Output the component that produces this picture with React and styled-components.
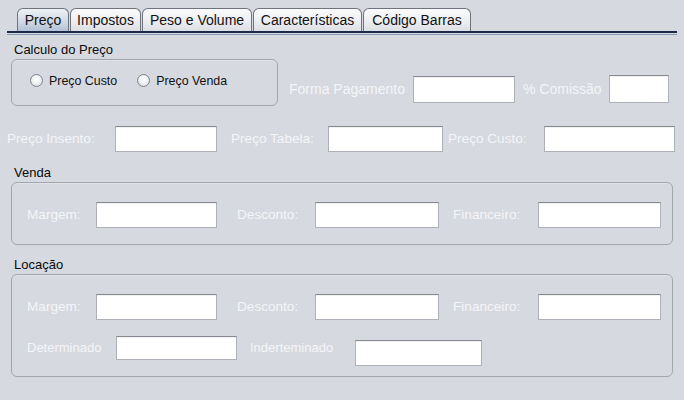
import React from "react";
import styled, { createGlobalStyle } from "styled-components";

const Global = createGlobalStyle`
  html, body { margin: 0; padding: 0; background: #d6d9df; }
  * { box-sizing: border-box; }
`;

const Page = styled.div`
  width: 684px;
  height: 400px;
  background: #d6d9df;
  overflow: hidden;
  font-family: "Liberation Sans", Arial, sans-serif;
  color: #000;
`;

const TabBar = styled.div`
  display: flex;
  height: 31px;
  padding: 8px 0 0 17px;
`;

const Tab = styled.div`
  width: ${(p) => p.$w}px;
  height: 23px;
  border: 1px solid #6f737b;
  border-bottom: none;
  border-radius: 6px 6px 0 0;
  margin-right: 1px;
  font-size: 14px;
  line-height: 22px;
  text-align: center;
  color: #111;
  background: ${(p) =>
    p.$active
      ? "linear-gradient(#eef1f6, #d2dae6 55%, #b3c1d5)"
      : "linear-gradient(#fbfbfc, #eceef1 55%, #dcdfe4)"};
`;

const TabLine = styled.div`
  height: 4px;
  margin: 0 7px;
  border-top: 2px solid #1c2a48;
  border-bottom: 1px solid #8b9ab6;
`;

const Content = styled.div`
  padding-top: 7px;
`;

const TopRow = styled.div`
  display: flex;
  align-items: flex-end;
`;

const Section = styled.div`
  margin-left: 11px;
  margin-top: ${(p) => p.$mt || 0}px;
  width: ${(p) => p.$w}px;
`;

const GroupTitle = styled.div`
  height: 16px;
  line-height: 16px;
  font-size: 13px;
  padding-left: 3px;
  margin-bottom: 1px;
  color: #0a0a0a;
`;

const GroupBox = styled.div`
  border: 1px solid #a2a6ae;
  border-radius: 6px;
  box-shadow: inset 0 1px 0 rgba(255, 255, 255, 0.25);
  padding: ${(p) => p.$pad};
  height: ${(p) => (p.$h ? `${p.$h}px` : "auto")};
  display: flex;
  flex-direction: column;
  gap: ${(p) => p.$gap || 0}px;
`;

const RadioRow = styled.div`
  display: flex;
  align-items: center;
  height: 13px;
`;

const RadioCircle = styled.span`
  width: 13px;
  height: 13px;
  border-radius: 50%;
  border: 1px solid #7e828a;
  background: radial-gradient(circle at 50% 40%, #ffffff 0%, #f1f2f4 45%, #cfd3d9 100%);
  margin-left: ${(p) => p.$ml}px;
  flex-shrink: 0;
`;

const RadioText = styled.span`
  font-size: 12.4px;
  margin-left: 6px;
  color: #111;
  white-space: nowrap;
`;

const FieldRow = styled.div`
  display: flex;
  align-items: ${(p) => p.$align || "center"};
  margin-top: ${(p) => p.$mt || 0}px;
  margin-bottom: ${(p) => p.$mb || 0}px;
`;

const Label = styled.span`
  margin-left: ${(p) => p.$ml}px;
  width: ${(p) => p.$w}px;
  flex-shrink: 0;
  font-size: ${(p) => p.$size || 13.6}px;
  line-height: ${(p) => p.$lh || 26}px;
  color: #f4f5f8;
  white-space: nowrap;
`;

const Input = styled.div`
  width: ${(p) => p.$w}px;
  height: ${(p) => p.$h || 26}px;
  margin-top: ${(p) => p.$mt || 0}px;
  flex-shrink: 0;
  background: #ffffff;
  border: 1px solid #aeb1b7;
  border-top-color: #85888f;
  box-shadow: inset 0 1px 1px rgba(0, 0, 0, 0.06);
`;

export default function App() {
  const tabs = [
    { t: "Preço", w: 52, a: true },
    { t: "Impostos", w: 71 },
    { t: "Peso e Volume", w: 110 },
    { t: "Características", w: 109 },
    { t: "Código Barras", w: 108 },
  ];
  return (
    <Page>
      <Global />
      <TabBar>
        {tabs.map((x) => (
          <Tab key={x.t} $w={x.w} $active={x.a}>
            {x.t}
          </Tab>
        ))}
      </TabBar>
      <TabLine />
      <Content>
        <TopRow>
          <Section $w={267}>
            <GroupTitle>Calculo do Preço</GroupTitle>
            <GroupBox $pad="14px 0 0 0" $h={47}>
              <RadioRow>
                <RadioCircle $ml={18} />
                <RadioText>Preço Custo</RadioText>
                <RadioCircle $ml={20} />
                <RadioText>Preço Venda</RadioText>
              </RadioRow>
            </GroupBox>
          </Section>
          <FieldRow $mb={3}>
            <Label $ml={11} $w={124} $size={14} $lh={27}>
              Forma Pagamento
            </Label>
            <Input $w={102} $h={27} />
            <Label $ml={8} $w={86} $size={14} $lh={27}>
              % Comissão
            </Label>
            <Input $w={60} $h={28} />
          </FieldRow>
        </TopRow>

        <FieldRow $mt={20}>
          <Label $ml={7} $w={108}>Preço Insento:</Label>
          <Input $w={102} />
          <Label $ml={14} $w={97}>Preço Tabela:</Label>
          <Input $w={115} />
          <Label $ml={5} $w={96}>Preço Custo:</Label>
          <Input $w={131} />
        </FieldRow>

        <Section $w={662} $mt={13}>
          <GroupTitle>Venda</GroupTitle>
          <GroupBox $pad="19px 0 16px 0">
            <FieldRow>
              <Label $ml={15} $w={69}>Margem:</Label>
              <Input $w={121} />
              <Label $ml={20} $w={78}>Desconto:</Label>
              <Input $w={124} />
              <Label $ml={14} $w={85}>Financeiro:</Label>
              <Input $w={123} />
            </FieldRow>
          </GroupBox>
        </Section>

        <Section $w={662} $mt={12}>
          <GroupTitle>Locação</GroupTitle>
          <GroupBox $pad="19px 0 10px 0" $gap={16}>
            <FieldRow>
              <Label $ml={15} $w={69}>Margem:</Label>
              <Input $w={121} />
              <Label $ml={20} $w={78}>Desconto:</Label>
              <Input $w={124} />
              <Label $ml={14} $w={85}>Financeiro:</Label>
              <Input $w={123} />
            </FieldRow>
            <FieldRow $align="flex-start">
              <Label $ml={15} $w={89} $lh={24} $size={13}>Determinado</Label>
              <Input $w={121} $h={24} />
              <Label $ml={13} $w={105} $lh={24} $size={13}>Inderteminado</Label>
              <Input $w={127} $mt={4} />
            </FieldRow>
          </GroupBox>
        </Section>
      </Content>
    </Page>
  );
}
